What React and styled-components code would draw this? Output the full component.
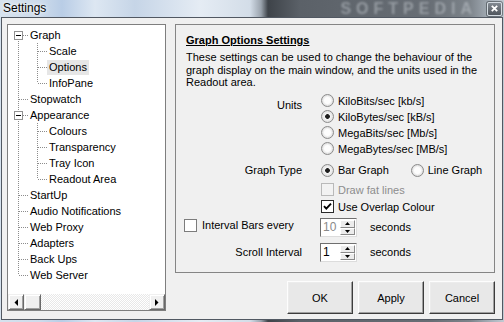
import React from "react";
import styled, { createGlobalStyle } from "styled-components";

const GlobalStyle = createGlobalStyle`
  html, body {
    margin: 0;
    padding: 0;
  }
  body {
    font-family: "Liberation Sans", Arial, sans-serif;
    font-size: 11px;
    color: #000;
    background: #c8d3df;
  }
`;

const treeItems = [
  { label: "Graph", cells: ["first"], box: true },
  { label: "Scale", cells: ["pass", "tee"] },
  { label: "Options", cells: ["pass", "tee"], selected: true },
  { label: "InfoPane", cells: ["pass", "end"] },
  { label: "Stopwatch", cells: ["tee"] },
  { label: "Appearance", cells: ["tee"], box: true },
  { label: "Colours", cells: ["pass", "tee"] },
  { label: "Transparency", cells: ["pass", "tee"] },
  { label: "Tray Icon", cells: ["pass", "tee"] },
  { label: "Readout Area", cells: ["pass", "end"] },
  { label: "StartUp", cells: ["tee"] },
  { label: "Audio Notifications", cells: ["tee"] },
  { label: "Web Proxy", cells: ["tee"] },
  { label: "Adapters", cells: ["tee"] },
  { label: "Back Ups", cells: ["tee"] },
  { label: "Web Server", cells: ["end"] },
];

const units = [
  { label: "KiloBits/sec [kb/s]" },
  { label: "KiloBytes/sec [kB/s]", checked: true },
  { label: "MegaBits/sec [Mb/s]" },
  { label: "MegaBytes/sec [MB/s]" },
];

const Arrow = ({ dir }) => {
  const pts = {
    left: "4,0 4,7 0.5,3.5",
    right: "0,0 0,7 3.5,3.5",
    up: "0,3 5,3 2.5,0",
    down: "0,0 5,0 2.5,3",
  }[dir];
  const vertical = dir === "up" || dir === "down";
  return (
    <svg width={vertical ? 5 : 4} height={vertical ? 3 : 7} viewBox={vertical ? "0 0 5 3" : "0 0 4 7"}>
      <polygon points={pts} fill="#000" />
    </svg>
  );
};

const Check = () => (
  <svg width="11" height="11" viewBox="0 0 11 11">
    <path d="M2 5.2 L4.3 7.6 L9 2.6" fill="none" stroke="#000" strokeWidth="1.9" />
  </svg>
);

const App = () => {
  return (
    <>
      <GlobalStyle />
      <Window>
        <TitleBar>
          <Title>Settings</Title>
          <Backdrop>SOFTPEDIA</Backdrop>
          <CloseButton>
            <svg width="7" height="7" viewBox="0 0 7 7">
              <path d="M0.8 0.8 L6.2 6.2 M6.2 0.8 L0.8 6.2" stroke="#fff" strokeWidth="1.8" />
            </svg>
          </CloseButton>
        </TitleBar>
        <Client>
          <Tree>
            <TreeList>
              {treeItems.map((item) => (
                <TreeRow key={item.label}>
                  {item.cells.map((kind, i) => (
                    <Cell key={i} $kind={kind}>
                      {item.box && i === item.cells.length - 1 && (
                        <Expander>
                          <Minus />
                        </Expander>
                      )}
                    </Cell>
                  ))}
                  <TreeLabel $selected={item.selected}>{item.label}</TreeLabel>
                </TreeRow>
              ))}
            </TreeList>
            <HScroll>
              <ScrollButton>
                <Arrow dir="left" />
              </ScrollButton>
              <ScrollButton $thumb />
              <ScrollTrack />
              <ScrollButton>
                <Arrow dir="right" />
              </ScrollButton>
            </HScroll>
          </Tree>

          <Main>
            <Group>
              <Heading>Graph Options Settings</Heading>
              <Intro>
                These settings can be used to change the behaviour of the graph display on the main
                window, and the units used in the Readout area.
              </Intro>

              <Row $mt={4}>
                <Label $pt={6}>Units</Label>
                <Control $column>
                  {units.map((u) => (
                    <Choice key={u.label}>
                      <Radio $checked={u.checked} />
                      {u.label}
                    </Choice>
                  ))}
                </Control>
              </Row>

              <Row $mt={5.5}>
                <Label>Graph Type</Label>
                <Control $gap={21}>
                  <Choice>
                    <Radio $checked />
                    Bar Graph
                  </Choice>
                  <Choice>
                    <Radio />
                    Line Graph
                  </Choice>
                </Control>
              </Row>

              <Row $mt={3} $h={17}>
                <Label />
                <Control>
                  <Choice $disabled>
                    <Box $disabled />
                    Draw fat lines
                  </Choice>
                </Control>
              </Row>

              <Row $mt={0} $h={17}>
                <Label />
                <Control>
                  <Choice>
                    <Box $checked>
                      <Check />
                    </Box>
                    Use Overlap Colour
                  </Choice>
                </Control>
              </Row>

              <Row $mt={3} $h={19}>
                <CheckLabel>
                  <Box />
                  Interval Bars every
                </CheckLabel>
                <Control>
                  <Spin $disabled value="10" />
                  <Unit>seconds</Unit>
                </Control>
              </Row>

              <Row $mt={6} $h={19} $center>
                <Label>Scroll Interval</Label>
                <Control>
                  <Spin value="1" />
                  <Unit>seconds</Unit>
                </Control>
              </Row>
            </Group>

            <Buttons>
              <Button>OK</Button>
              <Button>Apply</Button>
              <Button>Cancel</Button>
            </Buttons>
          </Main>
        </Client>
      </Window>
    </>
  );
};

const Spin = ({ value, $disabled }) => (
  <SpinBox>
    <SpinValue $disabled={$disabled}>{value}</SpinValue>
    <SpinButtons>
      <SpinButton>
        <Arrow dir="up" />
      </SpinButton>
      <SpinButton>
        <Arrow dir="down" />
      </SpinButton>
    </SpinButtons>
  </SpinBox>
);

const Window = styled.div`
  width: 504px;
  height: 322px;
  display: flex;
  flex-direction: column;
  box-sizing: border-box;
  overflow: hidden;
  background: linear-gradient(
    90deg,
    #d6e2ee 0px,
    #cddbeb 40px,
    #b9cde6 62px,
    #dde7f2 95px,
    #c6d5e7 135px,
    #e5ecf4 200px,
    #d3dde8 250px,
    #9aa3ad 261px,
    #3e4349 268px,
    #5b6168 300px,
    #686e75 430px,
    #7d848b 470px,
    #aab3bc 492px,
    #c2cad2 504px
  );
`;

const TitleBar = styled.div`
  height: 17px;
  flex-shrink: 0;
  display: flex;
  align-items: center;
  padding: 0 2px 0 3px;
  overflow: hidden;
`;

const Title = styled.span`
  font-family: "Liberation Sans", Arial, sans-serif;
  font-size: 12px;
  line-height: 17px;
  color: #000;
  text-shadow: 0 0 5px rgba(255, 255, 255, 0.95), 0 0 2px rgba(255, 255, 255, 0.9);
`;

const Backdrop = styled.span`
  margin-left: auto;
  margin-right: 10px;
  font-family: "Liberation Sans", Arial, sans-serif;
  font-weight: bold;
  font-size: 16px;
  letter-spacing: 5px;
  line-height: 17px;
  color: rgba(200, 206, 212, 0.5);
  filter: blur(1px);
  user-select: none;
`;

const CloseButton = styled.div`
  width: 15px;
  height: 14px;
  box-sizing: border-box;
  display: flex;
  align-items: center;
  justify-content: center;
  border: 1px solid #d4dbe2;
  border-radius: 2px;
  background: linear-gradient(#838a92, #50565d);
  box-shadow: 0 0 0 1px rgba(60, 66, 72, 0.6);
`;

const Client = styled.div`
  flex: 1;
  margin: 0 1px 2px 1px;
  border: 1px solid #515862;
  background: #f0f0f0;
  display: flex;
  gap: 9px;
  padding: 6px 7px 0 5px;
`;

const Tree = styled.div`
  width: 159px;
  height: 287px;
  box-sizing: border-box;
  flex-shrink: 0;
  border: 1px solid #7e7e7e;
  background: #fff;
  display: flex;
  flex-direction: column;
`;

const TreeList = styled.div`
  flex: 1;
  padding: 2px 0 0 1px;
`;

const TreeRow = styled.div`
  height: 16px;
  display: flex;
  align-items: center;
`;

const dots = (dir) => `repeating-linear-gradient(${dir}, #8c8c8c 0 1px, transparent 1px 2px)`;

const cellBackground = {
  pass: `${dots("to bottom")} 9px 0 / 1px 100% no-repeat`,
  tee: `${dots("to right")} 10px 8px / 9px 1px no-repeat, ${dots("to bottom")} 9px 0 / 1px 100% no-repeat`,
  end: `${dots("to right")} 10px 8px / 9px 1px no-repeat, ${dots("to bottom")} 9px 0 / 1px 8px no-repeat`,
  first: `${dots("to right")} 10px 8px / 9px 1px no-repeat, ${dots("to bottom")} 9px 8px / 1px 8px no-repeat`,
};

const Cell = styled.div`
  width: 19px;
  height: 16px;
  flex-shrink: 0;
  display: flex;
  align-items: center;
  padding-left: 5px;
  box-sizing: border-box;
  background: ${(p) => cellBackground[p.$kind]};
`;

const Expander = styled.div`
  width: 9px;
  height: 9px;
  box-sizing: border-box;
  border: 1px solid #919191;
  background: #fff;
  display: flex;
  align-items: center;
  justify-content: center;
`;

const Minus = styled.div`
  width: 5px;
  height: 1px;
  background: #000;
`;

const TreeLabel = styled.div`
  height: 15px;
  line-height: 15px;
  padding: 0 2px;
  white-space: nowrap;
  background: ${(p) => (p.$selected ? "#e6e6e6" : "transparent")};
`;

const HScroll = styled.div`
  height: 16px;
  display: flex;
  flex-shrink: 0;
`;

const ScrollButton = styled.div`
  width: ${(p) => (p.$thumb ? "17px" : "16px")};
  height: 16px;
  box-sizing: border-box;
  flex-shrink: 0;
  display: flex;
  align-items: center;
  justify-content: center;
  background: #f0f0f0;
  border: 1px solid;
  border-color: #f0f0f0 #696969 #696969 #f0f0f0;
  box-shadow: inset 1px 1px 0 #fff, inset -1px -1px 0 #a0a0a0;
`;

const ScrollTrack = styled.div`
  flex: 1;
  background: repeating-conic-gradient(#fff 0 25%, #e8e8e8 0 50%) 0 0 / 2px 2px;
`;

const Main = styled.div`
  width: 320px;
  display: flex;
  flex-direction: column;
  gap: 8px;
`;

const Group = styled.div`
  height: 249px;
  box-sizing: border-box;
  border: 1px solid #858585;
  padding: 9px 10px 0 10px;
`;

const Heading = styled.div`
  font-weight: bold;
  text-decoration: underline;
  line-height: 13px;
`;

const Intro = styled.p`
  margin: 4px 0 0;
  line-height: 12.5px;
`;

const Row = styled.div`
  display: flex;
  align-items: ${(p) => (p.$center ? "center" : "flex-start")};
  margin-top: ${(p) => p.$mt}px;
  height: ${(p) => (p.$h ? `${p.$h}px` : "auto")};
`;

const Label = styled.div`
  width: 116px;
  flex-shrink: 0;
  text-align: right;
  line-height: 13px;
  padding-top: ${(p) => p.$pt || 0}px;
  align-self: ${(p) => (p.$pt ? "flex-start" : "center")};
`;

const CheckLabel = styled.div`
  width: 118px;
  margin-left: -2px;
  flex-shrink: 0;
  display: flex;
  align-items: center;
  gap: 5px;
  padding-top: 1px;
  line-height: 13px;
`;

const Control = styled.div`
  margin-left: 18px;
  display: flex;
  flex-direction: ${(p) => (p.$column ? "column" : "row")};
  align-items: ${(p) => (p.$column ? "flex-start" : "center")};
  gap: ${(p) => p.$gap || 0}px;
  height: 100%;
`;

const Choice = styled.div`
  height: 16px;
  display: flex;
  align-items: center;
  gap: 4px;
  padding-left: 1px;
  white-space: nowrap;
  color: ${(p) => (p.$disabled ? "#8d8d8d" : "#000")};
`;

const Radio = styled.span`
  width: 13px;
  height: 13px;
  box-sizing: border-box;
  border-radius: 50%;
  border: 1px solid #8b8b8b;
  flex-shrink: 0;
  background: ${(p) =>
    p.$checked
      ? "radial-gradient(circle, #1e1e1e 0 2px, #f4f4f4 2.7px, #e2e2e2 5.5px)"
      : "radial-gradient(circle, #fdfdfd 0 3px, #dedede 5.5px)"};
`;

const Box = styled.span`
  width: 13px;
  height: 13px;
  box-sizing: border-box;
  flex-shrink: 0;
  display: flex;
  align-items: center;
  justify-content: center;
  border: 1px solid ${(p) => (p.$checked ? "#2a2a2a" : p.$disabled ? "#b9b9b9" : "#7c7c7c")};
  background: ${(p) => (p.$disabled ? "#f2f2f2" : "#fff")};
`;

const SpinBox = styled.div`
  width: 37px;
  height: 19px;
  box-sizing: border-box;
  flex-shrink: 0;
  display: flex;
  border: 1px solid;
  border-color: #6f6f6f #dcdcdc #dcdcdc #6f6f6f;
  background: #fff;
  padding: 1px 1px 1px 0;
`;

const SpinValue = styled.div`
  flex: 1;
  padding-left: 2px;
  line-height: 15px;
  font-size: 12px;
  color: ${(p) => (p.$disabled ? "#8a8a8a" : "#000")};
`;

const SpinButtons = styled.div`
  width: 15px;
  display: flex;
  flex-direction: column;
`;

const SpinButton = styled.div`
  flex: 1;
  display: flex;
  align-items: center;
  justify-content: center;
  box-sizing: border-box;
  background: #ececec;
  border: 1px solid;
  border-color: #fff #8a8a8a #8a8a8a #fff;
`;

const Unit = styled.span`
  margin-left: 13px;
  line-height: 13px;
`;

const Buttons = styled.div`
  display: flex;
  justify-content: flex-end;
  gap: 5px;
`;

const Button = styled.button`
  width: 66px;
  height: 33px;
  box-sizing: border-box;
  font-family: "Liberation Sans", Arial, sans-serif;
  font-size: 11px;
  color: #000;
  background: #e8e8e8;
  border: 1px solid;
  border-color: #fdfdfd #3c3c3c #3c3c3c #fdfdfd;
  box-shadow: inset -1px -1px 0 #a0a0a0, inset 1px 1px 0 #ececec;
  padding: 0;
`;

export default App;
